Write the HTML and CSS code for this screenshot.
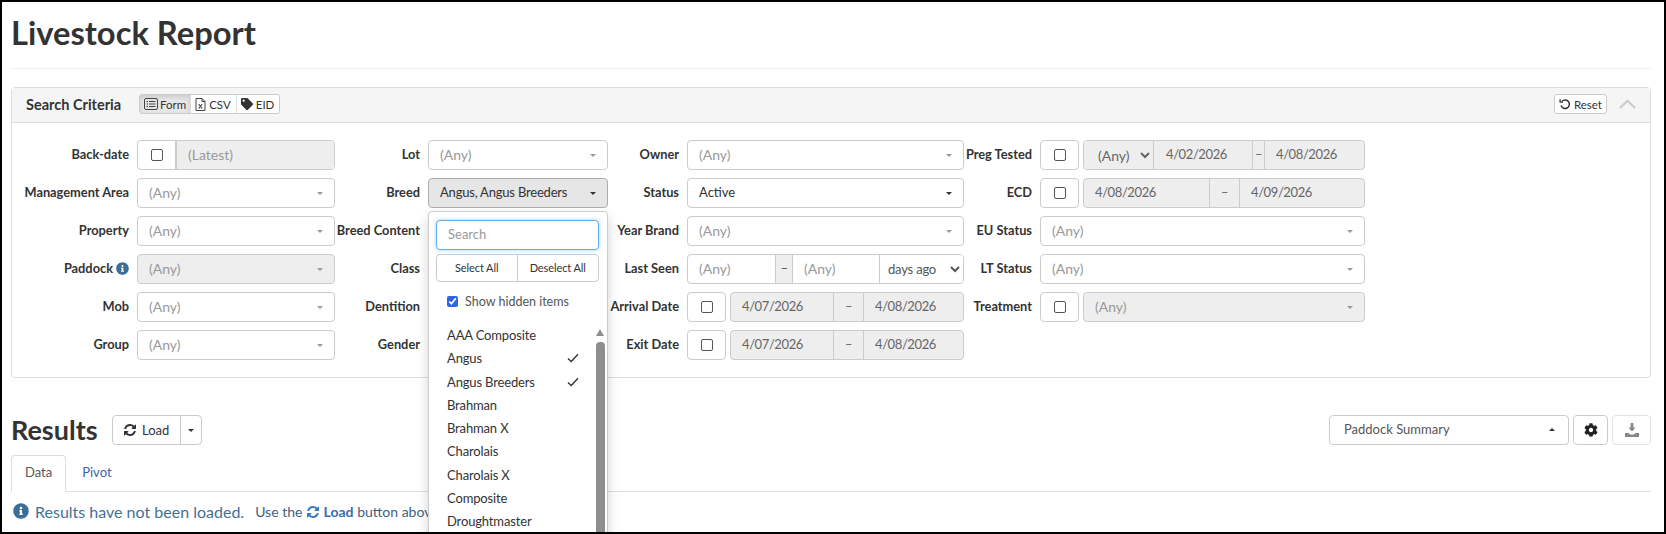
FILE: index.html
```html
<!DOCTYPE html>
<html lang="en">
<head>
    <meta charset="UTF-8">
    <title>Livestock Report</title>
    <link rel="stylesheet" href="styles.css">
</head>
<body>

<svg class="icon-defs" xmlns="http://www.w3.org/2000/svg">
    <symbol id="i-info" viewBox="0 0 512 512"><path d="M256 8C119.043 8 8 119.083 8 256c0 136.997 111.043 248 248 248s248-111.003 248-248C504 119.083 392.957 8 256 8zm0 110c23.196 0 42 18.804 42 42s-18.804 42-42 42-42-18.804-42-42 18.804-42 42-42zm56 254c0 6.627-5.373 12-12 12h-88c-6.627 0-12-5.373-12-12v-24c0-6.627 5.373-12 12-12h12v-64h-12c-6.627 0-12-5.373-12-12v-24c0-6.627 5.373-12 12-12h64c6.627 0 12 5.373 12 12v100h12c6.627 0 12 5.373 12 12v24z"/></symbol>
    <symbol id="i-refresh" viewBox="0 0 1792 1792"><path d="M1639 1056q0 5-1 7-64 268-268 434.5t-478 166.5q-146 0-282.5-55t-243.5-157l-129 129q-19 19-45 19t-45-19-19-45v-448q0-26 19-45t45-19h448q26 0 45 19t19 45-19 45l-137 137q71 66 161 102t187 36q134 0 250-65t186-179q11-17 53-117 8-23 30-23h192q13 0 22.5 9.5t9.5 22.5zm25-800v448q0 26-19 45t-45 19h-448q-26 0-45-19t-19-45 19-45l138-138q-148-137-349-137-134 0-250 65t-186 179q-11 17-53 117-8 23-30 23h-199q-13 0-22.5-9.5t-9.5-22.5v-7q65-268 270-434.5t480-166.5q146 0 284 55.5t245 156.5l130-129q19-19 45-19t45 19 19 45z"/></symbol>
    <symbol id="i-cog" viewBox="0 0 512 512"><path d="M487.4 315.7l-42.6-24.6c4.3-23.2 4.3-47 0-70.2l42.6-24.6c4.9-2.8 7.1-8.6 5.5-14-11.1-35.6-30-67.8-54.7-94.6-3.8-4.1-10-5.1-14.8-2.3L380.8 110c-17.9-15.4-38.5-27.3-60.8-35.1V25.8c0-5.6-3.9-10.5-9.4-11.7-36.7-8.2-74.3-7.8-109.2 0-5.5 1.2-9.4 6.1-9.4 11.7V75c-22.2 7.9-42.8 19.8-60.8 35.1L88.7 85.5c-4.9-2.8-11-1.9-14.8 2.3-24.7 26.7-43.6 58.9-54.7 94.6-1.7 5.4.6 11.2 5.5 14L67.3 221c-4.3 23.2-4.3 47 0 70.2l-42.6 24.6c-4.9 2.8-7.1 8.6-5.5 14 11.1 35.6 30 67.8 54.7 94.6 3.8 4.1 10 5.1 14.8 2.3l42.6-24.6c17.9 15.4 38.5 27.3 60.8 35.1v49.2c0 5.6 3.9 10.5 9.4 11.7 36.7 8.2 74.3 7.8 109.2 0 5.5-1.2 9.4-6.1 9.4-11.7v-49.2c22.2-7.9 42.8-19.8 60.8-35.1l42.6 24.6c4.9 2.8 11 1.9 14.8-2.3 24.7-26.7 43.6-58.9 54.7-94.6 1.5-5.5-.7-11.3-5.6-14.1zM256 336c-44.1 0-80-35.9-80-80s35.9-80 80-80 80 35.9 80 80-35.9 80-80 80z"/></symbol>
    <symbol id="i-tag" viewBox="0 0 512 512"><path d="M0 252.118V48C0 21.49 21.49 0 48 0h204.118a48 48 0 0 1 33.941 14.059l211.882 211.882c18.745 18.745 18.745 49.137 0 67.882L293.823 497.941c-18.745 18.745-49.137 18.745-67.882 0L14.059 286.059A48 48 0 0 1 0 252.118zM112 64c-26.51 0-48 21.49-48 48s21.49 48 48 48 48-21.49 48-48-21.49-48-48-48z"/></symbol>
</svg>

<div class="frame">

    <div class="page-head">
        <h1>Livestock Report</h1>
    </div>

    <!-- Search criteria -->
    <div class="panel">
        <div class="panel-head">
            <span class="panel-title">Search Criteria</span>
            <div class="btn-set">
                <span class="btn-seg active">
                    <svg class="ico-form" viewBox="0 0 14 12" fill="none" stroke="#444"><rect x="0.5" y="0.5" width="13" height="11" rx="1.5"/><path d="M2.5 3.5h1.5M5 3.5h6.5M2.5 6h1.5M5 6h6.5M2.5 8.5h1.5M5 8.5h6.5"/></svg>Form
                </span>
                <span class="btn-seg">
                    <svg class="ico-file" viewBox="0 0 11 13" fill="none" stroke="#444"><path d="M1 .5h6l3 3v9H1z"/><path d="M7 .5v3h3"/><path d="M3.7 6l3.4 4.5M7.1 6L3.7 10.5" stroke-width="1.2"/></svg>CSV
                </span>
                <span class="btn-seg">
                    <svg class="ico-tag"><use href="#i-tag"/></svg>EID
                </span>
            </div>
            <div class="panel-tools">
                <span class="btn-reset">
                    <svg class="ico-reset" viewBox="0 0 12 12" fill="none" stroke="#333" stroke-width="1.5"><path d="M3 3.2A4.3 4.3 0 1 1 2 7.6"/><path d="M1.1 1.2v3h3" stroke-width="1.3"/></svg>Reset
                </span>
                <svg class="ico-collapse" viewBox="0 0 18 10" fill="none" stroke="#ccc" stroke-width="2.4"><path d="M1 9.2L9 1.6l8 7.6"/></svg>
            </div>
        </div>

        <div class="criteria">
            <!-- row 1 -->
            <label class="lbl">Back-date</label>
            <div class="fld">
                <span class="seg-check"><input type="checkbox"></span>
                <span class="seg grow off muted">(Latest)</span>
            </div>
            <label class="lbl">Lot</label>
            <div class="fld pick"><span class="muted">(Any)</span><i class="caret soft"></i></div>
            <label class="lbl">Owner</label>
            <div class="fld pick"><span class="muted">(Any)</span><i class="caret soft"></i></div>
            <label class="lbl">Preg Tested</label>
            <div class="fld-row">
                <span class="box-check"><input type="checkbox"></span>
                <div class="fld grow off">
                    <select class="sel-any" disabled><option>(Any)</option></select>
                    <span class="seg date-a">4/02/2026</span>
                    <span class="seg dash-thin">–</span>
                    <span class="seg grow">4/08/2026</span>
                </div>
            </div>

            <!-- row 2 -->
            <label class="lbl">Management Area</label>
            <div class="fld pick"><span class="muted">(Any)</span><i class="caret soft"></i></div>
            <label class="lbl">Breed</label>
            <div class="breed-cell">
                <div class="fld pick open"><span class="breed-value">Angus, Angus Breeders</span><i class="caret"></i></div>

                <div class="drop">
                    <input class="drop-search" type="text" placeholder="Search">
                    <div class="drop-btns">
                        <span>Select All</span>
                        <span>Deselect All</span>
                    </div>
                    <label class="drop-hidden"><input type="checkbox" checked>Show hidden items</label>
                    <ul class="drop-list">
                        <li>AAA Composite</li>
                        <li>Angus<svg class="tick" viewBox="0 0 12 10" fill="none" stroke="#333" stroke-width="1.4"><path d="M1 5.5l3.2 3L11 1.2"/></svg></li>
                        <li>Angus Breeders<svg class="tick" viewBox="0 0 12 10" fill="none" stroke="#333" stroke-width="1.4"><path d="M1 5.5l3.2 3L11 1.2"/></svg></li>
                        <li>Brahman</li>
                        <li>Brahman X</li>
                        <li>Charolais</li>
                        <li>Charolais X</li>
                        <li>Composite</li>
                        <li>Droughtmaster</li>
                    </ul>
                    <div class="drop-scroll"><i class="scroll-up"></i><i class="scroll-thumb"></i></div>
                </div>
            </div>
            <label class="lbl">Status</label>
            <div class="fld pick"><span>Active</span><i class="caret"></i></div>
            <label class="lbl">ECD</label>
            <div class="fld-row">
                <span class="box-check"><input type="checkbox"></span>
                <div class="fld grow off">
                    <span class="seg date-b">4/08/2026</span>
                    <span class="seg dash-wide">–</span>
                    <span class="seg grow">4/09/2026</span>
                </div>
            </div>

            <!-- row 3 -->
            <label class="lbl">Property</label>
            <div class="fld pick"><span class="muted">(Any)</span><i class="caret soft"></i></div>
            <label class="lbl">Breed Content</label>
            <div class="fld pick"><span class="muted">(Any)</span><i class="caret soft"></i></div>
            <label class="lbl">Year Brand</label>
            <div class="fld pick"><span class="muted">(Any)</span><i class="caret soft"></i></div>
            <label class="lbl">EU Status</label>
            <div class="fld pick"><span class="muted">(Any)</span><i class="caret soft"></i></div>

            <!-- row 4 -->
            <label class="lbl">Paddock <svg class="ico-help"><use href="#i-info"/></svg></label>
            <div class="fld pick off"><span class="muted">(Any)</span><i class="caret soft"></i></div>
            <label class="lbl">Class</label>
            <div class="fld pick"><span class="muted">(Any)</span><i class="caret soft"></i></div>
            <label class="lbl">Last Seen</label>
            <div class="fld">
                <span class="seg seen-a muted">(Any)</span>
                <span class="seg dash-off">–</span>
                <span class="seg seen-b muted">(Any)</span>
                <select class="sel-days"><option>days ago</option></select>
            </div>
            <label class="lbl">LT Status</label>
            <div class="fld pick"><span class="muted">(Any)</span><i class="caret soft"></i></div>

            <!-- row 5 -->
            <label class="lbl">Mob</label>
            <div class="fld pick"><span class="muted">(Any)</span><i class="caret soft"></i></div>
            <label class="lbl">Dentition</label>
            <div class="fld pick"><span class="muted">(Any)</span><i class="caret soft"></i></div>
            <label class="lbl">Arrival Date</label>
            <div class="fld-row">
                <span class="box-check"><input type="checkbox"></span>
                <div class="fld grow off">
                    <span class="seg date-c">4/07/2026</span>
                    <span class="seg dash-wide">–</span>
                    <span class="seg grow">4/08/2026</span>
                </div>
            </div>
            <label class="lbl">Treatment</label>
            <div class="fld-row">
                <span class="box-check"><input type="checkbox"></span>
                <div class="fld pick grow off"><span class="muted">(Any)</span><i class="caret soft"></i></div>
            </div>

            <!-- row 6 -->
            <label class="lbl">Group</label>
            <div class="fld pick"><span class="muted">(Any)</span><i class="caret soft"></i></div>
            <label class="lbl">Gender</label>
            <div class="fld pick"><span class="muted">(Any)</span><i class="caret soft"></i></div>
            <label class="lbl">Exit Date</label>
            <div class="fld-row">
                <span class="box-check"><input type="checkbox"></span>
                <div class="fld grow off">
                    <span class="seg date-c">4/07/2026</span>
                    <span class="seg dash-wide">–</span>
                    <span class="seg grow">4/08/2026</span>
                </div>
            </div>
        </div>
    </div>

    <!-- Results -->
    <div class="results-head">
        <h2>Results</h2>
        <div class="load-group">
            <span class="btn-load"><svg class="ico-refresh"><use href="#i-refresh"/></svg>Load</span>
            <span class="btn-load-more"><i class="caret dark"></i></span>
        </div>
        <div class="results-tools">
            <div class="fld pick summary"><span>Paddock Summary</span><i class="caret up"></i></div>
            <span class="btn-square"><svg class="ico-cog"><use href="#i-cog"/></svg></span>
            <span class="btn-square faded">
                <svg class="ico-down" viewBox="0 0 14 14" fill="#888"><path d="M5.6 0h2.8v4.6h2.2L7 8.6 3.4 4.6h2.2z"/><path d="M0 10h3.6L5 11.4h4L10.4 10H14v4H0z"/></svg>
            </span>
        </div>
    </div>

    <div class="tabs">
        <span class="tab active">Data</span>
        <span class="tab">Pivot</span>
    </div>

    <div class="notice">
        <svg class="ico-notice"><use href="#i-info"/></svg>
        <span class="notice-main">Results have not been loaded.</span>
        <span class="notice-hint">Use the <svg class="ico-hint"><use href="#i-refresh"/></svg> <b>Load</b> button above to load results.</span>
    </div>

</div>

</body>
</html>
```

FILE: styles.css
```css
* {
    box-sizing: border-box;
}

body {
    margin: 0;
    font-family: Lato, "Open Sans", sans-serif;
    font-size: 13px;
    color: #333;
    background-color: #fff;
}

.icon-defs {
    display: none;
}

.frame {
    position: relative;
    width: 1666px;
    height: 534px;
    padding: 0 13px 0 9px;
    border: 2px solid #000;
    overflow: hidden;
}

/* Page title */
.page-head {
    height: 67px;
    border-bottom: 1px solid #eee;
    margin-bottom: 18px;
}

h1 {
    margin: 0;
    padding-top: 12px;
    font-size: 32.7px;
    line-height: 38px;
    font-weight: 700;
}

/* Search criteria panel */
.panel {
    height: 291px;
    border: 1px solid #ddd;
    border-radius: 4px;
    margin-bottom: 36px;
}

.panel-head {
    display: flex;
    align-items: center;
    height: 35px;
    padding: 0 14px 2px 14px;
    background-color: #f5f5f5;
    border-bottom: 1px solid #ddd;
}

.panel-title {
    width: 113px;
    font-weight: 700;
    font-size: 14.5px;
}

.btn-set {
    display: flex;
    height: 20px;
    border: 1px solid #ccc;
    border-radius: 3px;
    background-color: #fff;
    font-size: 11.5px;
}

.btn-seg {
    display: flex;
    align-items: center;
    gap: 3px;
    padding: 0 5px 0 4px;
    border-left: 1px solid #ddd;
}

.btn-seg:first-child {
    border-left: none;
    gap: 2px;
    padding: 0 4px;
}

.btn-seg.active {
    background-color: #e6e6e6;
    box-shadow: inset 0 2px 4px rgba(0, 0, 0, 0.125);
}

.ico-form {
    width: 14px;
    height: 12px;
}

.ico-file {
    width: 11px;
    height: 13px;
}

.ico-tag {
    width: 12px;
    height: 12px;
    fill: #333;
}

.panel-tools {
    display: flex;
    align-items: center;
    gap: 12px;
    margin-left: auto;
}

.btn-reset {
    display: flex;
    align-items: center;
    gap: 3px;
    height: 20px;
    padding: 0 4px;
    border: 1px solid #ccc;
    border-radius: 3px;
    background-color: #fff;
    font-size: 11.5px;
}

.ico-reset {
    width: 12px;
    height: 12px;
}

.ico-collapse {
    width: 17px;
    height: 10px;
}

.criteria {
    display: grid;
    grid-template-columns: 125px 198px 93px 180px 79px 277px 76px 325px;
    grid-auto-rows: 30px;
    row-gap: 8px;
    padding-top: 17px;
}

.lbl {
    display: flex;
    align-items: center;
    justify-content: flex-end;
    gap: 3px;
    padding: 0 8px 2px 0;
    white-space: nowrap;
    font-size: 12.8px;
    font-weight: 700;
}

.ico-help {
    width: 13px;
    height: 13px;
    fill: #3d6d99;
}

.fld {
    display: flex;
    align-items: center;
    height: 30px;
    background-color: #fff;
    border: 1px solid #ccc;
    border-radius: 4px;
    overflow: hidden;
    white-space: nowrap;
}

.fld.off {
    background-color: #eee;
    color: #666;
}

.fld.pick {
    justify-content: space-between;
    padding: 0 11px 2px;
}

.fld.open {
    background-color: #e6e6e6;
    border-color: #adadad;
}

.breed-value {
    letter-spacing: -0.2px;
}

.muted {
    color: #999;
    font-size: 14px;
}

.grow {
    flex: 1;
}

.caret {
    width: 0;
    height: 0;
    margin-top: 2px;
    border-left: 3.5px solid transparent;
    border-right: 3.5px solid transparent;
    border-top: 3.5px solid #333;
}

.caret.soft {
    border-top-color: #999;
}

.caret.up {
    border-top: none;
    border-bottom: 3.5px solid #333;
}

.seg {
    display: flex;
    align-items: center;
    height: 100%;
    padding: 0 0 2px 11px;
    border-left: 1px solid #ccc;
    letter-spacing: -0.4px;
}

.seg.muted {
    letter-spacing: 0;
}

.seg:first-child {
    border-left: none;
}

.seg.off {
    background-color: #eee;
}

.seg-check {
    display: flex;
    align-items: center;
    justify-content: center;
    width: 38px;
    height: 100%;
    border-right: 1px solid #ccc;
}

.seg-check input {
    margin-right: 2px;
}

.fld-row {
    display: flex;
    gap: 4px;
}

.box-check {
    display: flex;
    align-items: center;
    justify-content: center;
    flex: none;
    width: 39px;
    height: 30px;
    border: 1px solid #ccc;
    border-radius: 4px;
}

input[type="checkbox"] {
    width: 13px;
    height: 13px;
    margin: 0;
}

.seg-check input,
.box-check input {
    appearance: none;
    width: 12px;
    height: 12px;
    background-color: #fff;
    border: 1.5px solid #555;
    border-radius: 2px;
}

.sel-any {
    width: 69px;
    height: 100%;
    padding-left: 10px;
    border: none;
    background-color: #eee;
    color: #666;
    font: inherit;
    font-size: 14px;
    opacity: 1;
}

.date-a {
    width: 99px;
    padding-left: 12px;
}

.dash-thin {
    width: 12px;
    padding-left: 2px;
}

.date-b {
    width: 125px;
}

.dash-wide {
    width: 30px;
    justify-content: center;
    padding-left: 0;
}

.date-c {
    width: 102px;
}

.seen-a {
    width: 87px;
}

.dash-off {
    width: 17px;
    justify-content: center;
    padding-left: 0;
    background-color: #eee;
    color: #555;
}

.seen-b {
    width: 87px;
}

.sel-days {
    flex: 1;
    min-width: 0;
    height: 100%;
    padding-left: 4px;
    border: none;
    border-left: 1px solid #ccc;
    background-color: #fff;
    color: #555;
    font: inherit;
    letter-spacing: -0.2px;
}

/* Breed dropdown, open over the form */
.breed-cell {
    position: relative;
}

.drop {
    position: absolute;
    top: 33px;
    left: 0;
    z-index: 5;
    width: 180px;
    height: 400px;
    padding: 8px 7px 0;
    background-color: #fff;
    border: 1px solid #ccc;
    border-radius: 4px;
    box-shadow: 0 6px 12px rgba(0, 0, 0, 0.175);
}

.drop-search {
    display: block;
    width: 163px;
    height: 30px;
    padding: 0 11px 2px;
    border: 1px solid #66afe9;
    border-radius: 4px;
    box-shadow: 0 0 4px rgba(102, 175, 233, 0.6);
    font: inherit;
    outline: none;
}

.drop-search::placeholder {
    color: #999;
}

.drop-btns {
    display: grid;
    grid-template-columns: 1fr 1fr;
    width: 163px;
    height: 28px;
    margin-top: 4px;
    border: 1px solid #ccc;
    border-radius: 4px;
    font-size: 11px;
    line-height: 25px;
    text-align: center;
    letter-spacing: -0.1px;
}

.drop-btns span:first-child {
    border-right: 1px solid #ccc;
}

.drop-hidden {
    display: flex;
    align-items: center;
    gap: 7px;
    height: 14px;
    margin: 12px 0 0 11px;
    color: #555;
    font-size: 12.5px;
}

.drop-hidden input {
    accent-color: #2f63e8;
    width: 11px;
    height: 11px;
}

.drop-list {
    list-style: none;
    margin: 16px 0 0;
    padding: 0 0 0 11px;
    letter-spacing: -0.15px;
}

.drop-list li {
    position: relative;
    height: 23.25px;
    line-height: 23.25px;
}

.tick {
    position: absolute;
    top: 6px;
    right: 21px;
    width: 12px;
    height: 10px;
}

.drop-scroll {
    position: absolute;
    top: 117px;
    right: 2px;
    width: 9px;
}

.scroll-up {
    display: block;
    width: 0;
    height: 0;
    border-left: 4.5px solid transparent;
    border-right: 4.5px solid transparent;
    border-bottom: 7px solid #8e8e8e;
}

.scroll-thumb {
    display: block;
    height: 300px;
    margin-top: 6px;
    background-color: #8e8e8e;
    border-radius: 4px;
}

/* Results */
.results-head {
    display: flex;
    align-items: center;
    height: 31px;
}

h2 {
    width: 101px;
    margin: 0;
    font-size: 27px;
    line-height: 31px;
    font-weight: 700;
}

.load-group {
    display: flex;
    height: 30px;
    border: 1px solid #ccc;
    border-radius: 4px;
}

.btn-load {
    display: flex;
    align-items: center;
    gap: 5px;
    padding: 0 11px 0 10px;
    border-right: 1px solid #ccc;
}

.ico-refresh {
    width: 14px;
    height: 14px;
    fill: #333;
}

.btn-load-more {
    display: flex;
    align-items: center;
    justify-content: center;
    width: 20px;
}

.results-tools {
    display: flex;
    gap: 4px;
    margin-left: auto;
}

.fld.summary {
    width: 240px;
    padding: 0 13px 2px 14px;
    color: #555;
}

.btn-square {
    display: flex;
    align-items: center;
    justify-content: center;
    width: 35px;
    height: 30px;
    border: 1px solid #ccc;
    border-radius: 4px;
}

.btn-square.faded {
    width: 39px;
    border-color: #e3e3e3;
}

.ico-cog {
    width: 14px;
    height: 14px;
    fill: #222;
}

.ico-down {
    width: 14px;
    height: 14px;
}

.tabs {
    display: flex;
    height: 37px;
    margin-top: 10px;
    border-bottom: 1px solid #ddd;
}

.tab {
    height: 37px;
    margin-right: 2px;
    padding: 8px 13px 0;
    color: #3d5fa8;
    border: 1px solid transparent;
}

.tab.active {
    color: #555;
    border-color: #ddd #ddd #fff;
    border-radius: 4px 4px 0 0;
    background-color: #fff;
}

.notice {
    display: flex;
    align-items: center;
    height: 22px;
    margin-top: 8px;
    color: #31708f;
    white-space: nowrap;
}

.ico-notice {
    width: 16px;
    height: 16px;
    margin: 0 6px 0 2px;
    fill: #3d6d99;
}

.notice-main {
    font-size: 16px;
    color: #446f94;
}

.notice-hint {
    margin-left: 11px;
    font-size: 14px;
    color: #3d6185;
}

.notice-hint b {
    color: #3a6cb5;
}

.ico-hint {
    width: 14px;
    height: 14px;
    vertical-align: -2px;
    fill: #3a78c0;
}
```
